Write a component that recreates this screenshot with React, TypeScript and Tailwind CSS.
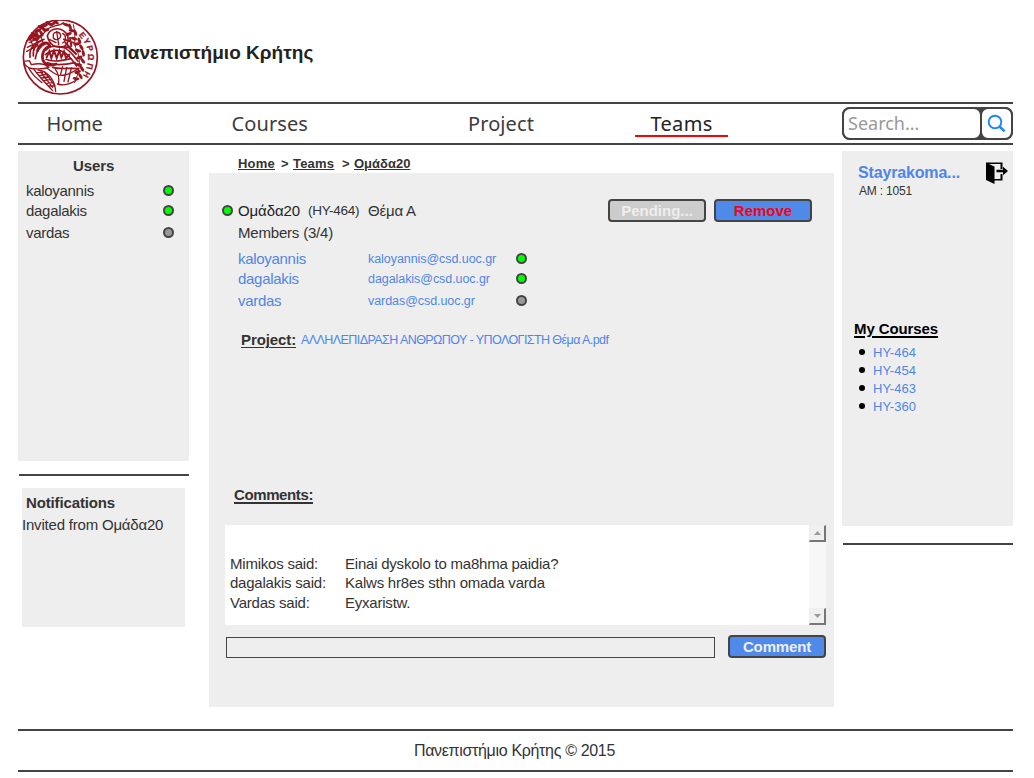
import type { ReactNode } from "react";

function Dot({ online, className = "" }: { online: boolean; className?: string }) {
  return (
    <span
      className={`block h-[11px] w-[11px] shrink-0 rounded-full border-2 border-[#444] ${online ? "bg-[#00ff00]" : "bg-[#999]"} ${className}`}
    />
  );
}

function Button({ children, className }: { children: ReactNode; className: string }) {
  return (
    <button
      className={`flex h-[23px] w-[98px] shrink-0 items-center justify-center rounded-[4px] border-2 border-[#444] text-[15px] leading-5 font-bold ${className}`}
    >
      {children}
    </button>
  );
}

const LETTERS: [string, number, number, number][] = [
  ["Ε", 218, 76, 50],
  ["Υ", 231, 93, 62],
  ["Ρ", 240, 115, 76],
  ["Ω", 243, 141, 90],
  ["Π", 240, 169, 104],
  ["Η", 230, 194, 118],
];

const LEAVES: [number, number, number][] = [
  [62, 84, -50], [72, 72, 20], [84, 62, -30], [92, 52, 30], [104, 47, -20], [116, 40, 30],
  [128, 42, -30], [138, 36, 40], [168, 44, 20], [180, 50, 70], [186, 62, 10], [196, 68, 70],
  [176, 72, -20], [192, 86, 20], [208, 92, 70], [200, 102, -10], [214, 112, 60], [204, 122, 20],
  [220, 130, 80], [208, 142, -20], [218, 152, 50], [206, 164, 10], [216, 176, 60], [203, 186, -20],
  [211, 198, 60], [198, 206, 10], [76, 88, 10], [94, 70, 60], [108, 60, -10], [68, 78, -20],
  [80, 72, 60], [100, 56, 50], [84, 84, -40],
];

function Crest() {
  return (
    <svg className="mt-5 ml-0.5 h-[76px] w-[80px] shrink-0" viewBox="30 30 240 228" fill="none" stroke="#98141f" strokeWidth="4" strokeLinecap="round">
      <circle cx="151" cy="141" r="111" strokeWidth="5" />
      {LEAVES.map(([x, y, a], i) => (
        <ellipse key={i} cx={x} cy={y} rx="10" ry="4.5" fill="#98141f" stroke="none" transform={`rotate(${a} ${x} ${y})`} />
      ))}
      <path d="M190 44C200 80 188 98 200 120C212 145 212 175 194 218" strokeWidth="3" />
      <path d="M50 92C75 70 88 90 108 62C122 44 148 50 160 38" />
      <path d="M112 78C118 58 142 50 160 62C180 76 178 102 160 110C136 116 118 104 112 78Z" strokeWidth="5" />
      <path d="M130 72C136 62 152 66 152 78C150 90 136 92 130 84Z M158 70C169 76 170 92 158 99 M140 64L146 104 M118 88L138 98" strokeWidth="4" />
      <path d="M58 98L96 78M52 112L92 92M50 124L82 108M62 88L72 120M78 84L84 108M92 78L98 96" strokeWidth="4" />
      <path d="M82 122C92 96 112 92 120 108C104 112 94 130 98 148C102 162 118 170 138 162" strokeWidth="8" />
      <path d="M70 138C68 112 82 96 102 88M76 146C78 124 92 106 110 100M60 142C58 124 66 108 78 100" strokeWidth="5" />
      <path d="M108 120C122 104 144 108 160 112C178 118 190 136 204 154M106 134C128 116 154 118 172 134C184 146 190 154 200 168" strokeWidth="5" />
      <path d="M110 142L118 124L124 144L132 122L140 144L148 122L154 142L162 124L168 144L178 134" strokeWidth="6" />
      <path d="M108 148C130 158 158 152 182 146M112 158C136 168 166 164 196 158M128 172C154 180 182 172 204 176" strokeWidth="5" />
      <path d="M41 154L58 152L64 164C82 160 104 160 116 172C98 178 72 178 58 174L46 166Z" fill="#fff" strokeWidth="4" />
      <path d="M56 174C64 190 78 204 96 218M72 178C82 194 102 214 128 242M84 180C112 184 134 206 137 244" strokeWidth="4" />
      <path d="M82 188L98 188M88 196L108 193M94 204L118 200M100 212L124 208M108 220L130 218M116 228L134 228M92 186L128 232M104 186L134 226" strokeWidth="4" />
      <path d="M110 174C124 182 132 194 148 196C170 198 184 188 206 176M158 170L152 192M170 172L162 214M184 174L174 216M142 222C162 228 184 222 202 208M136 178C144 188 148 202 146 220" strokeWidth="4" />
      <path d="M162 88L190 98M166 98L198 132M156 112L176 112L198 132M180 84L184 108" strokeWidth="6" />
      {LETTERS.map(([c, x, y, a]) => (
        <text
          key={c}
          x={x}
          y={y}
          transform={`rotate(${a} ${x} ${y})`}
          fill="#98141f"
          stroke="#98141f"
          strokeWidth="0.8"
          textAnchor="middle"
          dominantBaseline="central"
          className="font-['Liberation_Sans'] text-[25px] font-bold"
        >
          {c}
        </text>
      ))}
    </svg>
  );
}

const users = [
  { name: "kaloyannis", mail: "kaloyannis@csd.uoc.gr", online: true, gap: "" },
  { name: "dagalakis", mail: "dagalakis@csd.uoc.gr", online: true, gap: "" },
  { name: "vardas", mail: "vardas@csd.uoc.gr", online: false, gap: "mt-0.5" },
];

const comments = [
  { who: "Mimikos said:", text: "Einai dyskolo to ma8hma paidia?", gap: "" },
  { who: "dagalakis said:", text: "Kalws hr8es sthn omada varda", gap: "-mt-px" },
  { who: "Vardas said:", text: "Eyxaristw.", gap: "" },
];

function ScrollButton({ down = false }: { down?: boolean }) {
  return (
    <div className="flex h-[17px] w-[17px] items-center justify-center border-t border-r-2 border-b-2 border-l border-t-[#eee] border-r-[#777] border-b-[#777] border-l-[#eee] bg-[#f0f0f0]">
      <svg className="h-1 w-[7px]" viewBox="0 0 7 4">
        <path d={down ? "M0 0H7L3.5 4Z" : "M0 4H7L3.5 0Z"} fill="#9a9a9a" />
      </svg>
    </div>
  );
}

export default function App() {
  return (
    <div className="h-[778px] w-[1034px] overflow-hidden bg-white pr-[21px] pl-[18px] font-['Liberation_Sans',sans-serif] text-[15px] leading-5 whitespace-nowrap text-[#333]">
      <header className="flex h-[102px]">
        <Crest />
        <h1 className="mt-[41px] ml-3.5 text-[19px] leading-6 font-bold tracking-[0.03px] text-[#222]">Πανεπιστήμιο Κρήτης</h1>
      </header>

      <nav className="flex h-[43px] border-y-2 border-[#444] font-['Noto_Sans',sans-serif] text-[20px] leading-[39px] text-[#3c3c3c]">
        <a className="w-[185px] pl-[28.5px] tracking-[-0.2px]">Home</a>
        <a className="w-[236px] pl-[28.5px] tracking-[0.1px]">Courses</a>
        <a className="w-[196px] pl-[29px] tracking-[0.1px]">Project</a>
        <a className="h-[33px] w-[93px] border-b-2 border-[#f00] text-center tracking-[0.35px] text-[#222]">Teams</a>
        <div className="mt-[3px] ml-[114px] flex h-[33px] w-[171px] rounded-[8px] bg-[#444]">
          <div className="w-[140px] rounded-[8px] border-2 border-[#444] bg-white pl-1 text-[18px] leading-[28px] text-[#999]">Search…</div>
          <div className="-ml-0.5 flex w-[33px] items-center justify-center rounded-[8px] border-2 border-[#444] bg-white">
            <svg className="h-[19px] w-[19px]" viewBox="0 0 19 19" fill="none" stroke="#1e88f5">
              <circle cx="8" cy="8" r="6.3" strokeWidth="1.9" />
              <path d="M12.8 12.8L17.6 17.4" strokeWidth="2.6" />
            </svg>
          </div>
        </div>
      </nav>

      <div className="flex h-[584px]">
        <aside className="w-[171px] pt-1.5">
          <section className="h-[310px] bg-[#eee] pt-[5px] pr-[15px] pl-2">
            <h2 className="mb-[5px] pl-[47px] font-bold tracking-[-0.1px]">Users</h2>
            {users.map((u) => (
              <div key={u.name} className={`flex justify-between ${u.gap}`}>
                <span className="tracking-[-0.3px]">{u.name}</span>
                <Dot online={u.online} className="mt-1" />
              </div>
            ))}
          </section>
          <div className="mt-[13px] ml-px h-0.5 bg-[#444]" />
          <section className="mt-3 ml-1 h-[139px] w-[163px] bg-[#eee] pt-[5px]">
            <h2 className="pl-1 font-bold tracking-[-0.14px]">Notifications</h2>
            <p className="mt-0.5 tracking-[-0.2px]">Invited from Ομάδα20</p>
          </section>
        </aside>

        <main className="ml-5 w-[625px] pt-2">
          <div className="flex h-5 pl-[29px] text-[13px] leading-[22px] font-bold">
            <a className="w-[43px] tracking-[0.2px]"><span className="underline underline-offset-1">Home</span></a>
            <span className="w-3">&gt;</span>
            <a className="w-[49px] tracking-[0.2px]"><span className="underline underline-offset-1">Teams</span></a>
            <span className="w-3">&gt;</span>
            <a className="underline underline-offset-1">Ομάδα20</a>
          </div>
          <section className="h-[534px] bg-[#eee] pt-[26px]">
            <div className="flex h-[23px]">
              <Dot online className="mt-1.5 ml-[13px]" />
              <span className="mt-0.5 ml-[5px] w-[70px] tracking-[-0.1px] text-[#222]">Ομάδα20</span>
              <span className="mt-0.5 w-[60px] text-[13.5px] tracking-[-0.3px]">(HY-464)</span>
              <span className="mt-0.5 w-[240px] tracking-[-0.2px]">Θέμα Α</span>
              <Button className="bg-[#ccc] text-[#eee]">Pending...</Button>
              <Button className="ml-2 bg-[#4f8aea] text-[#f01]">Remove</Button>
            </div>
            <p className="mt-px pl-[29px] tracking-[-0.19px]">Members (3/4)</p>
            <div className="mt-1.5 pl-[29px] text-[#4f86e8]">
              {users.map((u) => (
                <div key={u.name} className={`flex ${u.gap}`}>
                  <a className="w-[130px] tracking-[-0.3px]">{u.name}</a>
                  <a className="w-[148px] text-[12.5px] tracking-[-0.06px]">{u.mail}</a>
                  <Dot online={u.online} className="mt-1" />
                </div>
              ))}
            </div>
            <div className="mt-[19px] flex pl-8">
              <span className="w-[60px] font-bold tracking-[-0.1px] underline decoration-1 underline-offset-2">Project:</span>
              <a className="text-[12.5px] tracking-[-0.57px] text-[#4f86e8]">ΑΛΛΗΛΕΠΙΔΡΑΣΗ ΑΝΘΡΩΠΟΥ - ΥΠΟΛΟΓΙΣΤΗ Θέμα Α.pdf</a>
            </div>
            <h2 className="mt-[135px] pl-[25px] font-bold tracking-[-0.39px] underline decoration-2 underline-offset-2">Comments:</h2>
            <div className="mt-5 ml-4 flex h-[100px] w-[601px] justify-between bg-white">
              <div className="pt-[29px] pl-[5px] tracking-[-0.22px]">
                {comments.map((c) => (
                  <div key={c.who} className={`flex ${c.gap}`}>
                    <span className="w-[115px]">{c.who}</span>
                    <span>{c.text}</span>
                  </div>
                ))}
              </div>
              <div className="flex w-[17px] flex-col justify-between bg-[#f7f7f7]">
                <ScrollButton />
                <ScrollButton down />
              </div>
            </div>
            <div className="mt-2.5 ml-[17px] flex">
              <input className="mt-0.5 h-[21px] w-[489px] border border-[#444] bg-[#eee] px-1 outline-none" />
              <Button className="ml-[13px] bg-[#4f8aea] tracking-[-0.15px] text-[#eee]">Comment</Button>
            </div>
          </section>
        </main>

        <aside className="ml-2 w-[171px] pt-1.5">
          <section className="h-[375px] bg-[#eee] pt-[11px]">
            <div className="flex h-[21px] pl-4">
              <a className="mt-px w-[128px] text-[16px] font-bold tracking-[-0.16px] text-[#4f86e8]">Stayrakoma...</a>
              <svg className="h-[22px] w-[22px] shrink-0" viewBox="0 0 22 22" fill="#000">
                <path d="M0 .5H16.5V7H14.5V2H3L8.5 4.5V17H14.5V12H16.5V18.5H8.5V22L0 18Z" />
                <path d="M10.5 7.7H17V4.8L22 9L17 13.2V10.3H10.5Z" />
              </svg>
            </div>
            <p className="pl-[17px] text-[12px] leading-4 tracking-[-0.19px]">AM : 1051</p>
            <h2 className="mt-[120px] pl-3 font-bold tracking-[-0.1px] text-black underline decoration-2 underline-offset-2">My Courses</h2>
            <ul className="mt-[5px] pl-[17px] text-[13px] leading-[18px] text-[#4f86e8]">
              {["HY-464", "HY-454", "HY-463", "HY-360"].map((c) => (
                <li key={c} className="flex">
                  <span className="mt-[5px] mr-2 h-1.5 w-1.5 rounded-full bg-black" />
                  {c}
                </li>
              ))}
            </ul>
          </section>
          <div className="mt-[17px] ml-px h-0.5 bg-[#444]" />
        </aside>
      </div>

      <footer className="h-[43px] border-y-2 border-[#444] pr-0.5 text-center text-[16px] leading-[39px] tracking-[-0.33px]">
        Πανεπιστήμιο Κρήτης © 2015
      </footer>
    </div>
  );
}
